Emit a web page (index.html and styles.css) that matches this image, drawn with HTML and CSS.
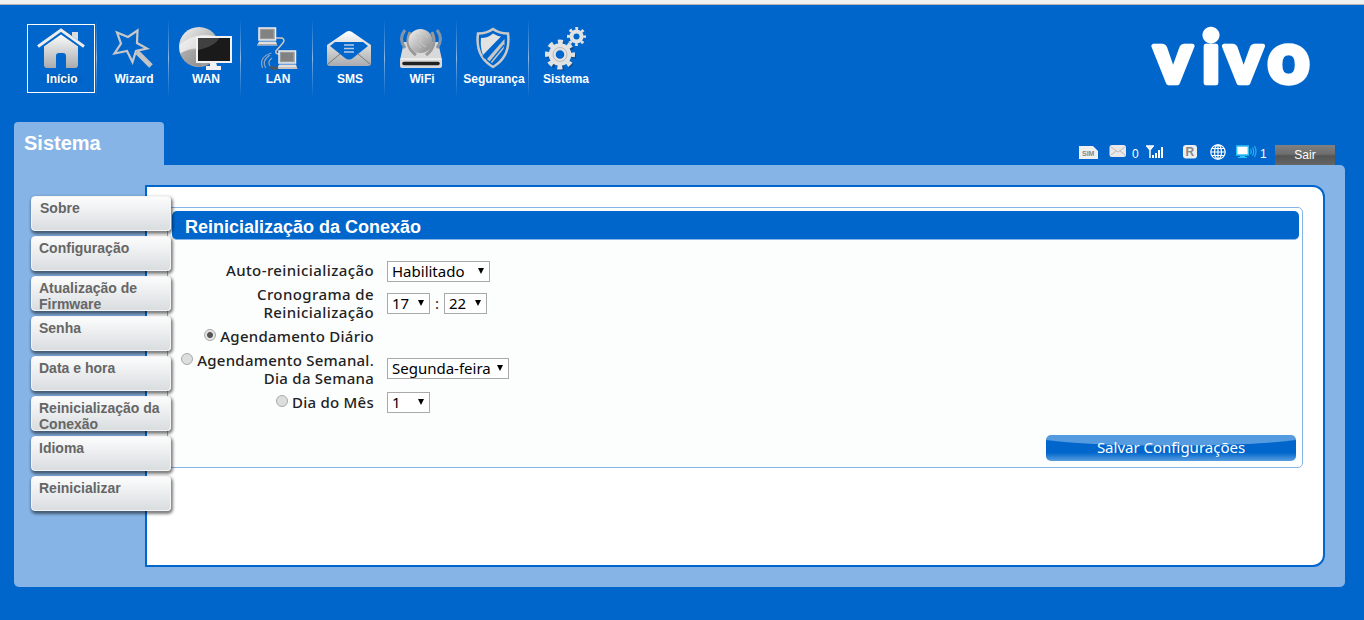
FILE: index.html
```html
<!DOCTYPE html>
<html lang="pt-BR">
<head>
  <meta charset="UTF-8" />
  <title>Vivo</title>
  <link rel="stylesheet" href="styles.css">
</head>
<body>
  <div class="top-strip"></div>

  <!-- shared gradients -->
  <svg class="defs" width="0" height="0">
    <defs>
      <linearGradient id="silver" x1="0" y1="0" x2="0" y2="1">
        <stop offset="0" stop-color="#ffffff"/>
        <stop offset="1" stop-color="#a9abae"/>
      </linearGradient>
      <linearGradient id="globe" x1="0" y1="0" x2="1" y2="1">
        <stop offset="0" stop-color="#f4f4f4"/>
        <stop offset="1" stop-color="#858585"/>
      </linearGradient>
    </defs>
  </svg>

  <header class="header">
    <ul class="nav">
      <li class="nav-item">
        <a class="nav-link active">
          <svg width="68" height="46" viewBox="0 0 68 46">
            <path d="M45 7h6v11h-6z" fill="#ddd"/>
            <path d="M17 21L34 8l17 13v19q0 3-3 3h-9V31q0-3-3-3h-4q-3 0-3 3v12h-9q-3 0-3-3z" fill="url(#silver)"/>
            <path d="M11 22.500L34 6.500l23 16" fill="none" stroke="#0066cc" stroke-width="5"/>
            <path d="M11 21.500L34 5l23 16.500" fill="none" stroke="#ececec" stroke-width="3"/>
          </svg>
          <span class="glow">Início</span>
        </a>
      </li>
      <li class="nav-item">
        <a class="nav-link">
          <svg width="68" height="46" viewBox="0 0 68 46">
            <path d="M38 27l14 14" stroke="#c4c4c4" stroke-width="5"/>
            <path d="M18 7.500l11 4.500 9.500-6.500-.5 12.500 10 5.500-11 2.500-3.500 11-5.500-11-12.500 2.500 6.500-10z" fill="#0066cc" stroke="#c8c8c8" stroke-width="2.200"/>
          </svg>
          <span>Wizard</span>
        </a>
      </li>
      <li class="nav-item">
        <a class="nav-link">
          <svg width="68" height="46" viewBox="0 0 68 46">
            <circle cx="28" cy="22" r="20" fill="url(#globe)"/>
            <path d="M8.500 20q10-9 23-10 9-1 14 3L33 25q-12-2-24 3z" fill="#fff" opacity=".5"/>
            <path d="M9 29q10-7 21-5v17q-15 2-21-12z" fill="#777" opacity=".4"/>
            <path d="M39 37h6l1 4h4v4H35v-4h4z" fill="#f2f2f2"/>
            <path d="M26 12h34v25H26z" fill="#1a1a1a" stroke="#f2f2f2" stroke-width="2"/>
            <path d="M27 13h21q-3 8-21 12z" fill="#666" opacity=".5"/>
          </svg>
          <span>WAN</span>
        </a>
      </li>
      <li class="nav-item">
        <a class="nav-link">
          <svg width="68" height="46" viewBox="0 0 68 46">
            <path d="M33 13h6q4 2 0 6l-6 7q-1 3 3 3" fill="none" stroke="#d2c8c4" stroke-width="1.500"/>
            <g stroke="#f0eeee" stroke-width="1.500" fill="#999">
              <path d="M16 3h16.500v12H16zM36 26h16.500v12H36z"/>
            </g>
            <path d="M18 5h12v8H18zM38 28h12v8H38z" fill="#828282"/>
            <path d="M16 16.500h17l1.500 4H14zM36 39.500h17l1.500 4.500H34z" fill="#e2dfde"/>
            <path d="M15 19.500h19M35 43h19" stroke="#aaa"/>
            <path d="M27 42q4 2 8 1" fill="none" stroke="#555" stroke-width="3"/>
            <path d="M27 41q-3-4 2-8M23 43q-5-7 4-13M19.500 43q-4-11 9-15" fill="none" stroke="#8fa3bd" stroke-width="1.200"/>
          </svg>
          <span>LAN</span>
        </a>
      </li>
      <li class="nav-item">
        <a class="nav-link">
          <svg width="68" height="46" viewBox="0 0 68 46">
            <path d="M12 20L31 7q3-2 6 0l19 13v18q0 3-3 3H15q-3 0-3-3z" fill="url(#silver)"/>
            <path d="M15 21l5-4h28l5 4-15 12q-4 3-8 0z" fill="#0066cc"/>
            <path d="M29 20h10M29 23.500h10M29 27h10" stroke="#b9cbe2" stroke-width="1.500"/>
            <path d="M13 39l12-10M55 39L43 29" stroke="#777"/>
          </svg>
          <span>SMS</span>
        </a>
      </li>
      <li class="nav-item">
        <a class="nav-link">
          <svg width="68" height="46" viewBox="0 0 68 46">
            <path d="M17 17h34l4 18v6q0 2-2 2H15q-2 0-2-2v-6z" fill="#d9d9d9"/>
            <path d="M18 5q-7 9 0 18M50 5q7 9 0 18" fill="none" stroke="#8395ab" stroke-width="3"/>
            <path d="M23 7q-6 14 6 23M45 7q6 14-6 23" fill="none" stroke="#999" stroke-width="3"/>
            <circle cx="33.500" cy="16" r="12" fill="url(#globe)"/>
            <path d="M29 10l6 2-2 6 6 4M28 18l6 5M37 8l4 5" fill="none" stroke="#c7c7c7"/>
            <path d="M13.500 34h41" stroke="#fff"/>
            <path d="M17 38.500h34" stroke="#222" stroke-width="3.500" stroke-linecap="round"/>
          </svg>
          <span>WiFi</span>
        </a>
      </li>
      <li class="nav-item">
        <a class="nav-link">
          <svg width="68" height="46" viewBox="0 0 68 46">
            <path d="M34 4q6 4.500 15 4.500 3 23-15 33.500Q16 31.500 19 8.500 28 8.500 34 4z" fill="#0066cc" stroke="#c9c9c9" stroke-width="2.500"/>
            <path d="M34 8.500q4 2.500 8 3L24 30q-3-7-2-17 7 0 12-4.500z" fill="#e2e2e2"/>
            <path d="M45.500 14q.5 5-1 10L33 38q-3-2-5-4z" fill="#c6c6c6"/>
            <path d="M42 14L25 33" stroke="#0066cc" stroke-width="2"/>
            <path d="M39 16L24 32M45 20L31 37" stroke="#0066cc" stroke-width="1.200"/>
          </svg>
          <span>Segurança</span>
        </a>
      </li>
      <li class="nav-item">
        <a class="nav-link">
          <svg width="68" height="46" viewBox="0 0 68 46">
            <circle cx="30.500" cy="31" r="12" fill="none" stroke="#222" opacity=".4" stroke-width="5" stroke-dasharray="4.710 4.710" stroke-dashoffset="2.350"/>
            <g fill="none" stroke="#e2e2e2">
              <circle cx="29" cy="29.500" r="7.800" stroke-width="7"/>
              <circle cx="29" cy="29.500" r="12.500" stroke-width="5" stroke-dasharray="4.910 4.910" stroke-dashoffset="2.450"/>
              <circle cx="45.500" cy="11.500" r="5" stroke-width="4"/>
              <circle cx="45.500" cy="11.500" r="8" stroke-width="3" stroke-dasharray="2.790 3.490" stroke-dashoffset="1.400"/>
            </g>
            <circle cx="29" cy="29.500" r="7" fill="none" stroke="#bbb"/>
          </svg>
          <span>Sistema</span>
        </a>
      </li>
    </ul>

    <svg class="logo" width="164" height="70" viewBox="0 0 164 70">
      <text x="3.500 51.500 74 117.500" y="62.500">vivo</text>
    </svg>
  </header>

  <div class="title-row">
    <h1 class="tab">Sistema</h1>

    <div class="status">
      <svg class="sim" width="20" height="14" viewBox="0 0 20 14">
        <path d="M0 0h14l5 5v8H0z" fill="#f0f0f0"/>
        <text x="3" y="9.500">SIM</text>
      </svg>
      <svg class="mail" width="18" height="14" viewBox="0 0 18 14">
        <rect x=".5" y="0" width="16.500" height="12" rx="2.500" fill="#e8e8e8"/>
        <path d="M2 2l7 5 7-5M2 10l5-4M16 10l-5-4" fill="none" stroke="#bbb"/>
      </svg>
      <span class="count">0</span>
      <svg class="signal" width="18" height="14" viewBox="0 0 18 14">
        <path d="M0 1h8M1 1l3 4 3-4M4 1v12" fill="none" stroke="#fff" stroke-width="1.500"/>
        <path d="M6 10h2v3H6zM9 8h2v5H9zM12 5h2v8h-2zM15 2h2v11h-2z" fill="#fff"/>
      </svg>
      <svg class="roaming" width="14" height="14" viewBox="0 0 14 14">
        <rect width="14" height="13.500" rx="3" fill="#eee"/>
        <text x="2.500" y="11">R</text>
      </svg>
      <svg class="world" width="16" height="16" viewBox="0 0 16 16">
        <g fill="none" stroke="#fff" stroke-width="1.200">
          <circle cx="8" cy="8" r="7.200"/>
          <ellipse cx="8" cy="8" rx="3.500" ry="7.200"/>
          <path d="M8 1v14M1 8h14M2 4.500h12M2 11.500h12"/>
        </g>
      </svg>
      <svg class="clients" width="21" height="14" viewBox="0 0 21 14">
        <path d="M.7 1h11.600v9H.7z" fill="#fff" stroke="#2cc0f5" stroke-width="1.400"/>
        <path d="M4 11h5v1h2v1H2v-1h2z" fill="#2cc0f5"/>
        <path d="M14.500 4q1.500 2.500 0 5M16.500 2.500q2.500 4 0 8M18.500 1q3 5.500 0 11" fill="none" stroke="#26b2f0" stroke-width="1.200"/>
      </svg>
      <span class="count">1</span>
      <a class="logout">Sair</a>
    </div>
  </div>

  <div class="frame">
    <ul class="side-menu">
      <li>Sobre</li>
      <li>Configuração</li>
      <li>Atualização de Firmware</li>
      <li>Senha</li>
      <li>Data e hora</li>
      <li>Reinicialização da Conexão</li>
      <li>Idioma</li>
      <li>Reinicializar</li>
    </ul>

    <main class="content">
      <form class="box">
        <h2 class="box-title">Reinicialização da Conexão</h2>

        <div class="fields">
          <label class="spaced">Auto-reinicialização</label>
          <div class="control">
            <span class="select wide"><select><option>Habilitado</option></select></span>
          </div>

          <label class="spaced">Cronograma de<br>Reinicialização</label>
          <div class="control">
            <span class="select"><select><option>17</option></select></span>
            <span class="colon">:</span>
            <span class="select"><select><option>22</option></select></span>
          </div>

          <label><input type="radio" name="schedule" checked>Agendamento Diário</label>
          <div class="control"></div>

          <label><input type="radio" name="schedule">Agendamento Semanal.<br>Dia da Semana</label>
          <div class="control">
            <span class="select day"><select><option>Segunda-feira</option></select></span>
          </div>

          <label><input type="radio" name="schedule">Dia do Mês</label>
          <div class="control">
            <span class="select"><select><option>1</option></select></span>
          </div>
        </div>

        <button type="button" class="save">Salvar Configurações</button>
      </form>
    </main>
  </div>
</body>
</html>
```
FILE: styles.css
```css
* {
  box-sizing: border-box;
}

body {
  margin: 0;
  height: 620px;
  overflow: hidden;
  background-color: #0066cc;
  font-family: "Liberation Sans", Arial, sans-serif;
}

ul {
  list-style: none;
  margin: 0;
  padding: 0;
}

svg {
  display: block;
}

.defs {
  position: absolute;
}

.top-strip {
  height: 5px;
  background-color: #f1f1f1;
  border-bottom: 1px solid #b4b4b4;
}

/* Header */
.header {
  display: flex;
  justify-content: space-between;
  height: 117px;
  padding: 15px 50px 0 25px;
}

.nav {
  display: flex;
  height: 76px;
}

.nav-item {
  width: 72px;
  padding: 4px 0 0 2px;
  border-right: 1px solid;
  border-image: linear-gradient(#0066cc, #5f9fdf 40%, #8dbbe8 50%, #5f9fdf 60%, #0066cc) 1;
}

.nav-item:last-child {
  border: none;
}

.nav-link {
  display: block;
  width: 68px;
  height: 69px;
  border: 1px solid transparent;
  color: #fff;
  font-size: 12px;
  font-weight: bold;
  line-height: 14px;
  text-align: center;
  white-space: nowrap;
}

.nav-link svg {
  margin: 0 0 0 -1px;
}

.nav-link span {
  display: block;
  margin: 1px -4px 0 -2px;
}

.nav-link .glow {
  background: radial-gradient(closest-side, #00509f, #0066cc) center / 50px 12px no-repeat;
}

.nav-link.active {
  border-color: #fff;
}

.logo {
  overflow: visible;
}

.logo text {
  font-family: Lato, sans-serif;
  font-size: 73px;
  font-weight: 900;
  fill: #fff;
  stroke: #fff;
  stroke-width: 4.5;
  stroke-linejoin: round;
}

/* Page title and status icons */
.title-row {
  display: flex;
  justify-content: space-between;
  align-items: flex-end;
  height: 43px;
  padding: 0 29px 0 14px;
}

.tab {
  width: 150px;
  height: 43px;
  margin: 0;
  padding: 9px 10px;
  border-radius: 4px 4px 0 0;
  background-color: #86b4e6;
  color: #fff;
  font-size: 20px;
  line-height: 24px;
}

.status {
  display: flex;
  align-items: flex-start;
  height: 21px;
  color: #fff;
  font-size: 12px;
}

.sim {
  margin: 2px 10px 0 0;
}

.sim text {
  font-size: 7px;
  font-weight: bold;
  fill: #888;
}

.mail {
  margin: 1px 5px 0 0;
}

.count {
  width: 7px;
  margin-top: 3px;
}

.signal {
  margin: 1px 19px 0 7px;
}

.roaming {
  margin-top: 1px;
}

.roaming text {
  font-size: 12px;
  font-weight: bold;
  fill: #888;
}

.world {
  margin: 0 10px 0 13px;
}

.clients {
  margin: 1px 3px 0 0;
}

.logout {
  width: 60px;
  height: 20px;
  margin: 1px 0 0 8px;
  background: linear-gradient(#808080, #6e6e6e 45%, #555 55%, #666);
  line-height: 20px;
  text-align: center;
}

/* Main frame */
.frame {
  display: flex;
  align-items: flex-start;
  height: 422px;
  margin: 0 19px 0 14px;
  padding: 20px 20px 20px 17px;
  border-radius: 0 5px 5px 5px;
  background-color: #86b4e6;
}

.side-menu {
  position: relative;
  z-index: 1;
  flex: none;
  width: 140px;
  margin: 11px -26px 0 0;
}

.side-menu li {
  height: 35px;
  margin-bottom: 5px;
  padding: 3px 8px 0 7px;
  border: 1px solid #f4f4f4;
  border-radius: 4px;
  background: linear-gradient(#fcfcfc, #d9dde0);
  box-shadow: 1px 2px 3px 1px rgba(0, 0, 0, 0.5);
  color: #666;
  font-size: 14px;
  font-weight: bold;
  line-height: 16px;
}

.side-menu li:first-child {
  padding-left: 8px;
}

.content {
  flex: 1;
  height: 382px;
  padding: 20px;
  border: 2px solid #0066cc;
  border-radius: 0 12px 12px 0;
  background-color: #fff;
}

.box {
  display: flex;
  flex-direction: column;
  height: 261px;
  padding: 3px;
  border: 1px solid #86b4e6;
  border-radius: 5px;
  background-color: #fcfefe;
}

.box-title {
  height: 29px;
  margin: 0 0 0 1px;
  padding-left: 13px;
  border-bottom: 1px solid #86b4e6;
  border-radius: 5px;
  background-color: #0066cc;
  color: #fff;
  font-size: 18px;
  line-height: 32px;
}

.fields {
  display: grid;
  grid-template-columns: 203px auto;
  column-gap: 13px;
  margin-top: 18px;
  color: #222;
  font-family: "Noto Sans", sans-serif;
  font-size: 15px;
}

.fields label {
  padding: 3px 0;
  font-weight: 500;
  letter-spacing: 0.25px;
  line-height: 18px;
  text-align: right;
  white-space: nowrap;
}

.fields .spaced {
  letter-spacing: 0.4px;
}

.control {
  display: flex;
  align-items: center;
}

.colon {
  width: 14px;
  text-align: center;
}

.select {
  position: relative;
  width: 43px;
  height: 21px;
}

.select.wide {
  width: 103px;
  margin-top: 2px;
}

.select.day {
  width: 122px;
  margin-top: -2px;
}

.select select {
  appearance: none;
  display: block;
  width: 100%;
  height: 21px;
  padding: 0 4px;
  border: 1px solid #a9a9a9;
  border-radius: 0;
  background-color: #fff;
  color: #000;
  font-family: "Noto Sans", sans-serif;
  font-size: 15px;
  line-height: 19px;
}

.select::after {
  content: "";
  position: absolute;
  top: 7px;
  right: 6px;
  border: 3.5px solid transparent;
  border-top: 6px solid #000;
  border-bottom: none;
}

input[type="radio"] {
  appearance: none;
  width: 12px;
  height: 12px;
  margin: 0 4px 1px 0;
  border: 1px solid #aaa;
  border-radius: 50%;
  background-color: #ddd;
}

input[type="radio"]:checked {
  background: radial-gradient(circle, #555 0 2.5px, #e4e4e4 3.5px);
}

.save {
  align-self: flex-end;
  width: 250px;
  height: 26px;
  margin: auto 3px 3px 0;
  padding: 0 0 2px;
  border: none;
  border-radius: 5px;
  background:
    radial-gradient(ellipse 145px 11px at 50% 0, #559be0 94%, transparent 100%),
    linear-gradient(#0066cc 68%, #5a9ee0);
  color: #fff;
  font-family: "Noto Sans", sans-serif;
  font-size: 15px;
}
```
